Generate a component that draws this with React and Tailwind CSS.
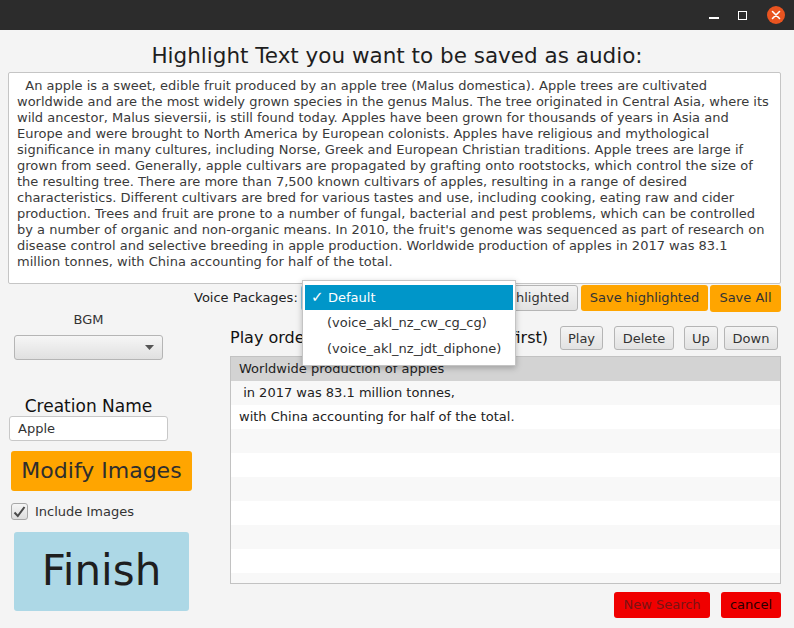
import React from "react";

const font = { fontFamily: '"DejaVu Sans", Verdana, sans-serif' };

const passage = [
  "  An apple is a sweet, edible fruit produced by an apple tree (Malus domestica). Apple trees are cultivated",
  "worldwide and are the most widely grown species in the genus Malus. The tree originated in Central Asia, where its",
  "wild ancestor, Malus sieversii, is still found today. Apples have been grown for thousands of years in Asia and",
  "Europe and were brought to North America by European colonists. Apples have religious and mythological",
  "significance in many cultures, including Norse, Greek and European Christian traditions. Apple trees are large if",
  "grown from seed. Generally, apple cultivars are propagated by grafting onto rootstocks, which control the size of",
  "the resulting tree. There are more than 7,500 known cultivars of apples, resulting in a range of desired",
  "characteristics. Different cultivars are bred for various tastes and use, including cooking, eating raw and cider",
  "production. Trees and fruit are prone to a number of fungal, bacterial and pest problems, which can be controlled",
  "by a number of organic and non-organic means. In 2010, the fruit's genome was sequenced as part of research on",
  "disease control and selective breeding in apple production. Worldwide production of apples in 2017 was 83.1",
  "million tonnes, with China accounting for half of the total.",
];

const rows = [
  "Worldwide production of apples",
  " in 2017 was 83.1 million tonnes,",
  "with China accounting for half of the total.",
  "", "", "", "", "", "", "",
];

const GrayButton = ({ label, w }) => (
  <button
    className={`h-[24px] ${w} rounded-[3px] border border-[#b5b5b5] bg-gradient-to-b from-[#f4f4f4] to-[#e2e2e2] text-[13px] text-[#333] leading-none`}
  >
    {label}
  </button>
);

export default function App() {
  return (
    <div className="w-[794px] h-[628px] overflow-hidden bg-[#f4f4f4] text-[#333]" style={font}>
      {/* title bar */}
      <div className="h-[30px] bg-[#2c2c2c] flex items-center justify-end">
        <div className="w-[10px] h-[2px] bg-white mt-[6px] mr-[19px]" />
        <div className="w-[9px] h-[9px] border-[1.5px] border-white mr-[20px]" />
        <div className="w-[18px] h-[18px] rounded-full bg-[#e95420] flex items-center justify-center mr-[9px]">
          <svg width="10" height="10" viewBox="0 0 10 10">
            <path d="M1.5 1.5 L8.5 8.5 M8.5 1.5 L1.5 8.5" stroke="white" strokeWidth="1.6" strokeLinecap="round" />
          </svg>
        </div>
      </div>

      <div className="relative">
        {/* heading */}
        <div className="pt-[14px] h-[42px] text-center text-[21.5px] leading-[24px] text-[#1e1e1e] whitespace-nowrap">
          Highlight Text you want to be saved as audio:
        </div>

        {/* text area */}
        <div className="ml-[8px] w-[773px] h-[212px] border border-[#c5c5c5] bg-white rounded-[2px] pl-[8px] pt-[5px]">
          {passage.map((line, i) => (
            <div key={i} className="whitespace-pre text-[13px] leading-[16px] text-[#3a3a3a]">
              {line}
            </div>
          ))}
        </div>

        <div className="flex">
          {/* left column */}
          <div className="w-[192px] shrink-0 flex flex-col">
            <div className="mt-[28px] ml-[14px] w-[149px] text-center text-[13px] leading-[16px]">BGM</div>
            <div className="mt-[7px] ml-[14px] w-[149px] h-[25px] rounded-[3px] border border-[#b5b5b5] bg-gradient-to-b from-[#f6f6f6] to-[#e0e0e0] flex items-center justify-end pr-[8px]">
              <svg width="9" height="5" viewBox="0 0 9 5">
                <path d="M0 0 L9 0 L4.5 5 Z" fill="#555" />
              </svg>
            </div>
            <div className="mt-[36px] ml-[9px] w-[159px] text-center text-[17px] leading-[20px] text-[#111]">
              Creation Name
            </div>
            <div className="ml-[9px] w-[159px] h-[25px] rounded-[3px] border border-[#c8c8c8] bg-white flex items-center pl-[8px] text-[13px] text-[#333]">
              Apple
            </div>
            <button className="mt-[10px] ml-[11px] w-[181px] h-[40px] rounded-[3px] bg-[#ffa500] text-[22px] leading-none text-[#2e2e2e]">
              Modify Images
            </button>
            <div className="mt-[11px] ml-[11px] flex items-center">
              <div className="w-[17px] h-[17px] rounded-[3px] border border-[#a8a8a8] bg-gradient-to-b from-[#f6f6f6] to-[#dedede] flex items-center justify-center">
                <svg width="13" height="12" viewBox="0 0 13 12">
                  <path d="M1.5 6.5 L4.8 10 L11.5 1" stroke="#4a4a4a" strokeWidth="2" fill="none" />
                </svg>
              </div>
              <span className="ml-[7px] text-[13px] text-[#333]">Include Images</span>
            </div>
            <button className="mt-[10px] ml-[14px] w-[175px] h-[79px] rounded-[3px] bg-[#add8e6] text-[42px] leading-none text-[#1e1e1e]">
              Finish
            </button>
          </div>

          {/* right column */}
          <div className="flex-1 flex flex-col pr-[13px]">
            <div className="mt-[1px] h-[26px] flex items-center whitespace-nowrap">
              <span className="ml-[2px] shrink-0 text-[13px] text-[#222]">Voice Packages:</span>
              <div className="ml-[3px] shrink-0 w-[152px] h-[26px] rounded-[3px] border-[1.5px] border-[#8fc9e6] bg-[#ececec]" />
              <button className="ml-auto shrink-0 w-[122px] h-[26px] rounded-[3px] border border-[#b5b5b5] bg-gradient-to-b from-[#f4f4f4] to-[#e2e2e2] text-[13px] text-[#333]">
                Play highlighted
              </button>
              <button className="ml-[3px] shrink-0 w-[127px] h-[26px] rounded-[3px] bg-[#ffa500] text-[13px] text-[#333]">
                Save highlighted
              </button>
              <button className="ml-[2px] shrink-0 w-[71px] h-[27px] rounded-[3px] bg-[#ffa500] text-[13px] text-[#333]">
                Save All
              </button>
            </div>

            <div className="mt-[15px] h-[24px] flex items-center pl-[38px]">
              <span className="text-[16px] text-[#111] whitespace-nowrap">Play order (top item will be played first)</span>
              <div className="ml-auto flex items-center mr-[3px]">
                <GrayButton label="Play" w="w-[43px]" />
                <div className="w-[11px]" />
                <GrayButton label="Delete" w="w-[60px]" />
                <div className="w-[10px]" />
                <GrayButton label="Up" w="w-[34px]" />
                <div className="w-[6px]" />
                <GrayButton label="Down" w="w-[54px]" />
              </div>
            </div>

            <div className="mt-[6px] ml-[38px] h-[228px] border border-[#c2c2c2] bg-white overflow-hidden">
              {rows.map((r, i) => (
                <div
                  key={i}
                  className={`h-[24px] flex items-center pl-[8px] whitespace-pre text-[13px] text-[#222] ${
                    i === 0 ? "bg-[#d3d3d3]" : i % 2 === 1 ? "bg-[#f8f8f8]" : "bg-white"
                  }`}
                >
                  {r}
                </div>
              ))}
            </div>

            <div className="mt-[8px] flex justify-end">
              <button className="w-[96px] h-[26px] rounded-[3px] bg-[#f00000] text-[13px] text-[#7a1414]">
                New Search
              </button>
              <button className="ml-[11px] w-[60px] h-[26px] rounded-[3px] bg-[#f00000] text-[13px] text-[#2a0000]">
                cancel
              </button>
            </div>
          </div>
        </div>

        {/* open voice package popup */}
        <div className="absolute left-[302px] top-[250px] w-[214px] h-[86px] bg-white border border-[#c4c4c4] shadow-[0_2px_6px_rgba(0,0,0,0.25)] p-[4px_2px] text-[13px]">
          <div className="h-[25px] bg-[#0096c9] text-white flex items-center pl-[6px]">
            <span className="w-[17px] text-[15px] leading-none">✓</span>
            <span>Default</span>
          </div>
          <div className="h-[26px] flex items-center pl-[22px] text-[#333]">(voice_akl_nz_cw_cg_cg)</div>
          <div className="h-[26px] flex items-center pl-[22px] text-[#333]">(voice_akl_nz_jdt_diphone)</div>
        </div>
      </div>
    </div>
  );
}
